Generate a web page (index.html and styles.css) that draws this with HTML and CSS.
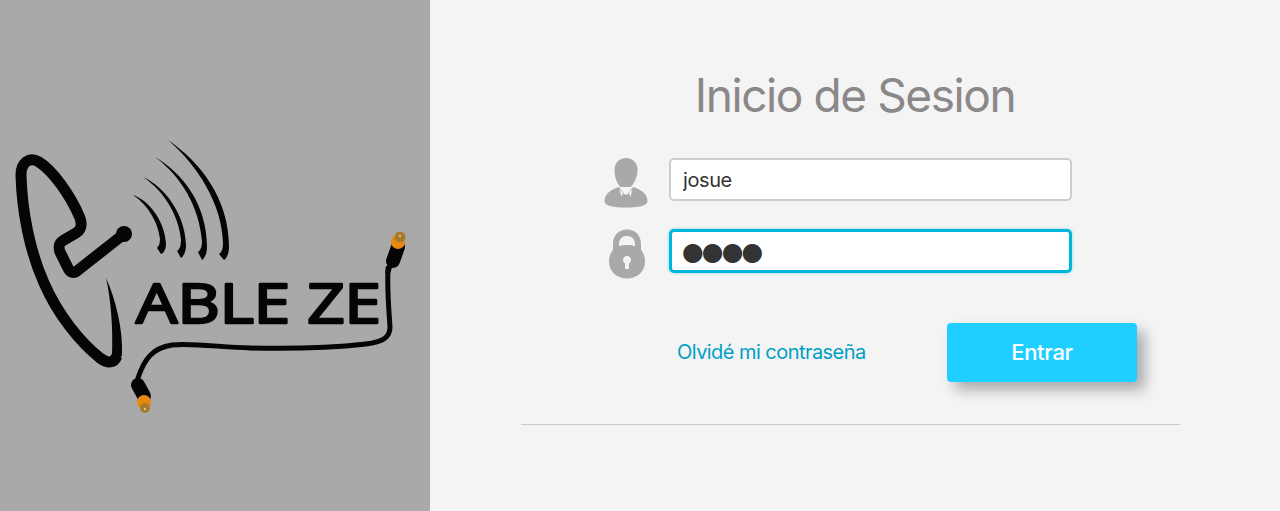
FILE: index.html
```html
<!DOCTYPE html>
<html lang="es">
<head>
<meta charset="utf-8">
<title>Inicio de Sesion</title>
<link rel="stylesheet" href="styles.css">
</head>
<body>
<main class="page">
  <aside class="brand">
    <svg class="logo" viewBox="0 0 430 511" width="430" height="511" aria-label="Cable Ze">
      <path class="dish" d="M124 234L77 271C73 274 70 272 68 268L60 252C58 246 59 243 64 240L76 233C82 229 82 224 80 218C70 194 52 170 39 162C29 156 21 163 21 175C22 212 30 252 44 283C58 315 80 342 100 358C108 364 114 363 117 356"/>
      <path class="ink" d="M106 278C116 300 123 330 122 354C121 360 118 363 114 365L112 355C113 328 111 300 106 278Z"/>
      <circle class="ink" cx="124" cy="234" r="8"/>
      <path class="ink" d="M133 195C150 201 165 222 166 244C166 249 164 253 161 254L157 248C159 246 160 243 160 239C158 222 148 205 133 195Z"/>
      <path class="ink" d="M143 177C165 187 185 214 186 245C186 251 184 256 181 258L177 251C180 249 181 245 181 240C179 215 163 190 143 177Z"/>
      <path class="ink" d="M155 157C183 173 207 205 207 247C207 253 205 258 202 260L198 252C201 250 202 246 202 241C199 207 182 177 155 157Z"/>
      <path class="ink" d="M168 140C200 162 229 198 229 247C229 253 227 258 224 260L219 254C222 252 223 248 223 243C222 204 198 166 168 140Z"/>
      <text class="logo-text" x="136" y="323" textLength="245" lengthAdjust="spacingAndGlyphs">ABLE ZE</text>
      <path class="cable" d="M388 268C387 290 389 312 390 327C390 338 382 342 366 344C330 348 290 349 250 348C220 347 190 343 172 345C152 348 144 360 138 378"/>
      <path class="plug-body" d="M398 247L393 261"/>
      <path class="cable" d="M391 262L388 272"/>
      <circle class="orange" cx="398" cy="242" r="7"/>
      <circle class="brass" cx="400" cy="237" r="5.500"/>
      <circle class="pin" cx="400" cy="236" r="1"/>
      <path class="plug-body" d="M138 385L144 396"/>
      <circle class="orange" cx="144" cy="402" r="7"/>
      <circle class="brass" cx="145" cy="408" r="5"/>
      <circle class="pin" cx="145" cy="409" r="1"/>
    </svg>
  </aside>
  <section class="panel">
    <h1 class="title">Inicio de Sesion</h1>
    <form class="form">
      <div class="field">
        <svg class="icon" viewBox="0 0 44 50" width="44" height="50" aria-hidden="true">
          <path class="icon-fill" d="M22 0C29 0 33.500 5 33.500 12C33.500 19 30 26 26.500 29L16.500 29C13 26 10.500 19 10.500 12C10.500 5 15 0 22 0Z"/>
          <path class="icon-fill" d="M15 29L21 37L22 36L23 37L29 29C35 31 43 34 43.500 43C43.500 47 38 49.500 22 49.500C6 49.500 0.500 47 0.500 43C1 34 9 31 15 29Z"/>
          <path class="icon-cut" d="M15.500 31L19 35L17.500 39ZM28.500 31L25 35L26.500 39Z"/>
        </svg>
        <input class="input" type="text" value="josue" aria-label="Usuario">
      </div>
      <div class="field field-lock">
        <svg class="icon" viewBox="-1 0 44 50" width="44" height="50" aria-hidden="true">
          <path class="icon-fill" fill-rule="evenodd" d="M22 0.500C31 0.500 36 7 36 15L36 21C39 25 40 28.500 40 32C40 43 32 49.500 22 49.500C12 49.500 4 43 4 32C4 28.500 5 25 8 21L8 15C8 7 13 0.500 22 0.500ZM22 7C17 7 14 10.500 14 15L14 17C18 15.500 26 15.500 30 17L30 15C30 10.500 27 7 22 7ZM22 27C19.500 27 18 28.700 18 31C18 32.500 19 33.800 20 34.500L20 40L24 40L24 34.500C25 33.800 26 32.500 26 31C26 28.700 24.500 27 22 27Z"/>
        </svg>
        <input class="input input-focus" type="text" value="●●●●" aria-label="Contraseña">
      </div>
      <div class="actions">
        <a class="forgot" href="#">Olvidé mi contraseña</a>
        <button class="submit" type="button">Entrar</button>
      </div>
      <hr class="rule">
    </form>
  </section>
</main>
</body>
</html>
```
FILE: styles.css
```css
* { box-sizing: border-box; }
html, body { margin: 0; height: 100%; overflow: hidden; }
body { font-family: Inter, "Liberation Sans", sans-serif; background: #f4f4f4; }
.page { display: flex; height: 511px; }
.brand { flex: 0 0 430px; background: #a9a9a9; }
.logo { display: block; filter: blur(0.4px); }
.dish { fill: none; stroke: #050505; stroke-width: 11; stroke-linejoin: round; }
.ink { fill: #050505; }
.cable { fill: none; stroke: #050505; stroke-width: 5; stroke-linecap: round; }
.plug-body { fill: none; stroke: #050505; stroke-width: 14; stroke-linecap: round; }
.orange { fill: #e8880f; }
.brass { fill: #a87a2c; }
.pin { fill: #e8d8b0; }
.logo-text { font-family: "Open Sans", Lato, sans-serif; font-weight: 500; font-size: 54px; fill: #050505; stroke: #050505; stroke-width: 2.500; stroke-linejoin: round; }
.panel { flex: 1; padding-top: 66px; }
.title { margin: 0 0 33px; height: 59px; line-height: 59px; text-align: center; font-size: 46px; font-weight: 400; letter-spacing: -1.4px; color: #8a8888; }
.form { margin-left: 91px; width: 659px; padding-left: 83px; }
.field { display: flex; align-items: flex-start; height: 50px; }
.field-lock { margin-top: 21px; }
.icon { flex: none; margin-right: 21px; }
.icon-fill { fill: #a9a9a9; }
.icon-cut { fill: #f4f4f4; }
.input { width: 403px; height: 43px; padding: 0 12px; border: 2px solid #cdcdcd; border-radius: 5px; background: #fff; font-family: Inter, sans-serif; font-size: 20px; letter-spacing: -0.4px; color: #333; outline: none; }
.input-focus { height: 44px; padding: 0 10px; border: 3px solid #00b5dc; font-family: "DejaVu Sans", sans-serif; font-size: 25px; letter-spacing: -2px; box-shadow: 0 0 3px rgba(0, 181, 220, 0.5); }
.actions { display: flex; align-items: center; margin-top: 44px; height: 59px; padding-left: 73px; }
.forgot { position: relative; top: -1px; font-size: 20px; letter-spacing: -0.55px; color: #009fc4; text-decoration: none; }
.submit { margin-left: auto; margin-right: 43px; width: 190px; height: 59px; padding: 0 0 2px; border: 0; border-radius: 4px; background: #1fcfff; color: #fff; font-family: Inter, sans-serif; font-size: 22px; font-weight: 500; letter-spacing: -0.3px; box-shadow: 8px 8px 14px rgba(0, 0, 0, 0.3); }
.rule { margin: 42px 0 0 -83px; width: 659px; height: 1px; border: 0; background: #c9c9c9; }
```
